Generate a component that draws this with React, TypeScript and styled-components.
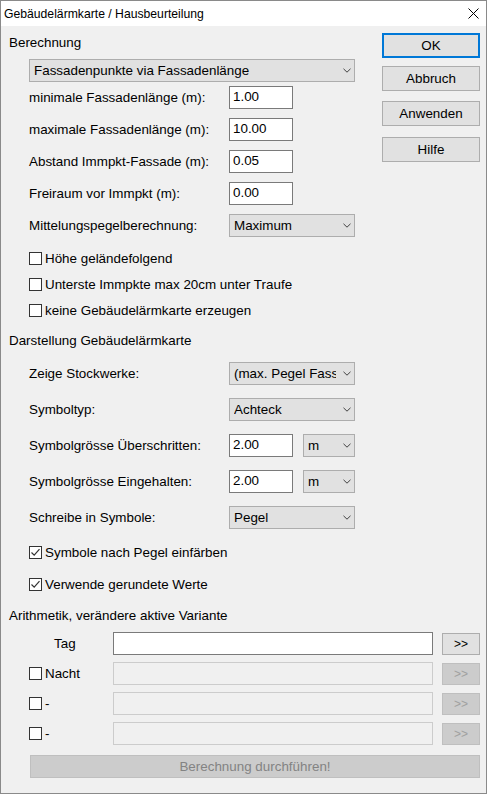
import React from 'react';
import styled, { createGlobalStyle } from 'styled-components';

const GlobalStyle = createGlobalStyle`
  html, body { margin: 0; padding: 0; background: #ffffff; }
  body {
    font-family: "Liberation Sans", Arial, sans-serif;
    font-size: 13.4px;
    color: #000;
  }
  * { box-sizing: border-box; }
`;

const Window = styled.div`
  width: 487px;
  height: 794px;
  border: 1px solid #8a8a8a;
  background: #f0f0f0;
  display: flex;
  flex-direction: column;
`;

const TitleBar = styled.div`
  height: 25px;
  flex-shrink: 0;
  background: #ffffff;
  display: flex;
  align-items: center;
  justify-content: space-between;
  padding: 0 7px 0 3px;
  font-family: "Liberation Sans", Arial, sans-serif;
  font-size: 12.2px;
`;

const CloseGlyph = styled.svg`
  width: 11px;
  height: 11px;
  display: block;
`;

const Body = styled.div`
  flex: 1;
  display: flex;
  flex-direction: column;
  padding: 0 6px 0 8px;
`;

const Top = styled.div`
  display: flex;
  align-items: flex-start;
`;

const LeftColumn = styled.div`
  width: 346px;
  display: flex;
  flex-direction: column;
`;

const ButtonColumn = styled.div`
  margin-left: auto;
  width: 98px;
  display: flex;
  flex-direction: column;
`;

const Heading = styled.div<{ $top: number }>`
  margin-top: ${p => p.$top}px;
  height: 16px;
  line-height: 16px;
  white-space: nowrap;
`;

const FieldRow = styled.div<{ $top: number }>`
  margin-top: ${p => p.$top}px;
  height: 23px;
  display: flex;
  align-items: center;
  padding-left: 20px;
`;

const FieldLabel = styled.span`
  width: 200px;
  flex-shrink: 0;
  white-space: nowrap;
`;

const TextBox = styled.input<{ $width: number }>`
  width: ${p => p.$width}px;
  height: 23px;
  margin: 0;
  border: 1px solid #7a7a7a;
  background: #ffffff;
  padding: 0 3px 2px;
  font-family: "Liberation Sans", Arial, sans-serif;
  font-size: 13.4px;
  color: #000;
  outline: none;
  flex-shrink: 0;
  &:disabled {
    background: #f0f0f0;
    border-color: #cccccc;
  }
`;

const Combo = styled.div<{ $width: number; $gap?: number }>`
  width: ${p => p.$width}px;
  height: 23px;
  margin-left: ${p => p.$gap ?? 0}px;
  flex-shrink: 0;
  display: flex;
  align-items: center;
  border: 1px solid #adadad;
  background: #e1e1e1;
  padding-left: 4px;
`;

/* long entries are cut at the arrow, as a Windows combo box does */
const ComboText = styled.span`
  flex: 1;
  overflow: hidden;
  white-space: nowrap;
  padding-bottom: 1px;
`;

const ChevronSlot = styled.span`
  width: 18px;
  flex-shrink: 0;
  display: flex;
  justify-content: flex-end;
  padding-right: 3px;
`;

const CheckRow = styled.div<{ $top: number }>`
  margin-top: ${p => p.$top}px;
  height: 26px;
  display: flex;
  align-items: center;
  padding-left: 20px;
`;

const Box = styled.span`
  width: 13px;
  height: 13px;
  flex-shrink: 0;
  border: 1px solid #333333;
  background: #ffffff;
  margin-right: 3px;
  display: flex;
  align-items: center;
  justify-content: center;
`;

const CheckLabel = styled.span`
  white-space: nowrap;
`;

const PushButton = styled.div<{ $top: number; $default?: boolean }>`
  margin-top: ${p => p.$top}px;
  height: 25px;
  display: flex;
  align-items: center;
  justify-content: center;
  background: #e1e1e1;
  border: ${p => (p.$default ? '2px solid #0078d7' : '1px solid #adadad')};
  padding-bottom: 1px;
`;

const ArithRow = styled.div<{ $top: number }>`
  margin-top: ${p => p.$top}px;
  height: 23px;
  display: flex;
  align-items: center;
`;

const ArithLead = styled.div`
  width: 104px;
  flex-shrink: 0;
  padding-left: 20px;
  display: flex;
  align-items: center;
`;

const TagLabel = styled.span`
  margin-left: 25px;
`;

const SmallButton = styled.div<{ $disabled?: boolean }>`
  width: 38px;
  height: 22px;
  margin-left: 9px;
  flex-shrink: 0;
  display: flex;
  align-items: center;
  justify-content: center;
  font-size: 12px;
  background: ${p => (p.$disabled ? '#cccccc' : '#e1e1e1')};
  border: 1px solid ${p => (p.$disabled ? '#bfbfbf' : '#adadad')};
  color: ${p => (p.$disabled ? '#a0a0a0' : '#000')};
`;

const RunButton = styled.div`
  margin: 10px 0 0 21px;
  width: 450px;
  height: 23px;
  display: flex;
  align-items: center;
  justify-content: center;
  background: #cccccc;
  border: 1px solid #bfbfbf;
  color: #838383;
  padding-bottom: 1px;
`;

const Chevron = () => (
  <svg width="8" height="5" viewBox="0 0 8 5">
    <path d="M0.5 0.8 L4 4.2 L7.5 0.8" fill="none" stroke="#404040" strokeWidth="1" />
  </svg>
);

const Select = ({ value, width, gap }: { value: string; width: number; gap?: number }) => (
  <Combo $width={width} $gap={gap}>
    <ComboText>{value}</ComboText>
    <ChevronSlot>
      <Chevron />
    </ChevronSlot>
  </Combo>
);

const Check = ({ checked }: { checked?: boolean }) => (
  <Box>
    {checked && (
      <svg width="11" height="11" viewBox="0 0 11 11">
        <path d="M1.5 5.5 L4.2 8.2 L9.5 2.2" fill="none" stroke="#333" strokeWidth="1.2" />
      </svg>
    )}
  </Box>
);

const CheckOption = ({ top, label, checked }: { top: number; label: string; checked?: boolean }) => (
  <CheckRow $top={top}>
    <Check checked={checked} />
    <CheckLabel>{label}</CheckLabel>
  </CheckRow>
);

const NumberField = ({ top, label, value }: { top: number; label: string; value: string }) => (
  <FieldRow $top={top}>
    <FieldLabel>{label}</FieldLabel>
    <TextBox $width={64} defaultValue={value} />
  </FieldRow>
);

export default function App() {
  return (
    <>
      <GlobalStyle />
      <Window>
        <TitleBar>
          <span>Gebäudelärmkarte / Hausbeurteilung</span>
          <CloseGlyph viewBox="0 0 11 11">
            <path d="M0.5 0.5 L10.5 10.5 M10.5 0.5 L0.5 10.5" stroke="#000" strokeWidth="1" />
          </CloseGlyph>
        </TitleBar>
        <Body>
          <Top>
            <LeftColumn>
              <Heading $top={9}>Berechnung</Heading>
              <FieldRow $top={8}>
                <Select value="Fassadenpunkte via Fassadenlänge" width={326} />
              </FieldRow>
              <NumberField top={4} label="minimale Fassadenlänge (m):" value="1.00" />
              <NumberField top={9} label="maximale Fassadenlänge (m):" value="10.00" />
              <NumberField top={9} label="Abstand Immpkt-Fassade (m):" value="0.05" />
              <NumberField top={9} label="Freiraum vor Immpkt (m):" value="0.00" />
              <FieldRow $top={9}>
                <FieldLabel>Mittelungspegelberechnung:</FieldLabel>
                <Select value="Maximum" width={126} />
              </FieldRow>
              <CheckOption top={8} label="Höhe geländefolgend" />
              <CheckOption top={0} label="Unterste Immpkte max 20cm unter Traufe" />
              <CheckOption top={0} label="keine Gebäudelärmkarte erzeugen" />

              <Heading $top={10}>Darstellung Gebäudelärmkarte</Heading>
              <FieldRow $top={13}>
                <FieldLabel>Zeige Stockwerke:</FieldLabel>
                <Select value="(max. Pegel Fassade)" width={126} />
              </FieldRow>
              <FieldRow $top={13}>
                <FieldLabel>Symboltyp:</FieldLabel>
                <Select value="Achteck" width={126} />
              </FieldRow>
              <FieldRow $top={13}>
                <FieldLabel>Symbolgrösse Überschritten:</FieldLabel>
                <TextBox $width={64} defaultValue="2.00" />
                <Select value="m" width={52} gap={10} />
              </FieldRow>
              <FieldRow $top={13}>
                <FieldLabel>Symbolgrösse Eingehalten:</FieldLabel>
                <TextBox $width={64} defaultValue="2.00" />
                <Select value="m" width={52} gap={10} />
              </FieldRow>
              <FieldRow $top={13}>
                <FieldLabel>Schreibe in Symbole:</FieldLabel>
                <Select value="Pegel" width={126} />
              </FieldRow>
              <CheckOption top={10} label="Symbole nach Pegel einfärben" checked />
              <CheckOption top={6} label="Verwende gerundete Werte" checked />
            </LeftColumn>
            <ButtonColumn>
              <PushButton $top={7} $default>OK</PushButton>
              <PushButton $top={8}>Abbruch</PushButton>
              <PushButton $top={10}>Anwenden</PushButton>
              <PushButton $top={11}>Hilfe</PushButton>
            </ButtonColumn>
          </Top>

          <Heading $top={11}>Arithmetik, verändere aktive Variante</Heading>
          <ArithRow $top={8}>
            <ArithLead>
              <TagLabel>Tag</TagLabel>
            </ArithLead>
            <TextBox $width={320} defaultValue="" />
            <SmallButton>&gt;&gt;</SmallButton>
          </ArithRow>
          <ArithRow $top={7}>
            <ArithLead>
              <Check />
              <CheckLabel>Nacht</CheckLabel>
            </ArithLead>
            <TextBox $width={320} disabled defaultValue="" />
            <SmallButton $disabled>&gt;&gt;</SmallButton>
          </ArithRow>
          <ArithRow $top={7}>
            <ArithLead>
              <Check />
              <CheckLabel>-</CheckLabel>
            </ArithLead>
            <TextBox $width={320} disabled defaultValue="" />
            <SmallButton $disabled>&gt;&gt;</SmallButton>
          </ArithRow>
          <ArithRow $top={7}>
            <ArithLead>
              <Check />
              <CheckLabel>-</CheckLabel>
            </ArithLead>
            <TextBox $width={320} disabled defaultValue="" />
            <SmallButton $disabled>&gt;&gt;</SmallButton>
          </ArithRow>
          <RunButton>Berechnung durchführen!</RunButton>
        </Body>
      </Window>
    </>
  );
}
